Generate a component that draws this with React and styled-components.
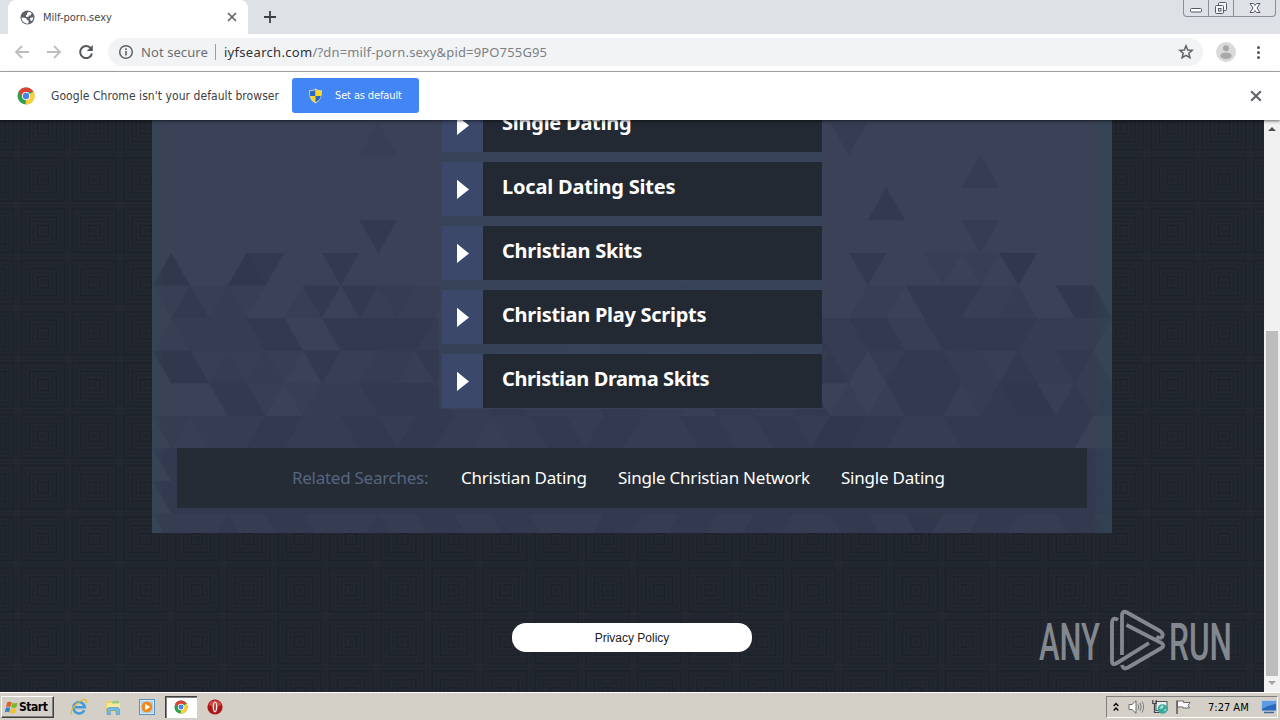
import React from 'react';
import styled, { createGlobalStyle } from 'styled-components';

const UI_FONT = '"DejaVu Sans Condensed", "DejaVu Sans", sans-serif';
const WEB_FONT = '"Noto Sans", "Open Sans", sans-serif';

const GlobalStyle = createGlobalStyle`
  * {
    box-sizing: border-box;
  }
  body {
    margin: 0;
    overflow: hidden;
    background: #1f242d;
  }
`;

const Screen = styled.div`
  display: flex;
  flex-direction: column;
  width: 1280px;
  height: 720px;
  font-family: ${WEB_FONT};
`;

const Text = styled.span`
  font-family: ${({ $font }) => $font || WEB_FONT};
  font-size: ${({ $size }) => $size}px;
  font-weight: ${({ $weight }) => $weight || 400};
  letter-spacing: ${({ $spacing }) => $spacing || 0}px;
  color: ${({ $color }) => $color};
  white-space: pre;
`;

/* browser frame */

const TabStrip = styled.div`
  display: flex;
  align-items: flex-start;
  height: 34px;
  padding-left: 8px;
  background: #dee1e6;
`;

const Tab = styled.div`
  display: flex;
  align-items: center;
  width: 240px;
  height: 34px;
  padding: 0 11px 0 12px;
  border-radius: 8px 8px 0 0;
  background: #fff;
`;

const TabTitle = styled(Text)`
  flex: 1;
  padding-left: 8px;
`;

const NewTab = styled.div`
  display: flex;
  width: 12px;
  margin: 11px auto 0 16px;
`;

const WindowButtons = styled.div`
  display: flex;
  width: 93px;
  height: 17px;
  margin-right: 4px;
  border: 1px solid #8b8f97;
  border-top: 0;
  border-radius: 0 0 4px 4px;
`;

const WindowButton = styled.div`
  display: flex;
  justify-content: center;
  width: ${({ $width }) => $width}px;
  border-right: ${({ $last }) => ($last ? '0' : '1px solid #8b8f97')};
`;

const Toolbar = styled.div`
  display: flex;
  align-items: center;
  height: 38px;
  padding: 0 12px 2px 14px;
  border-bottom: 1px solid #b0b2b5;
  background: #fff;
`;

const NavIcons = styled.div`
  display: flex;
  gap: 16px;
  width: 94px;
`;

const AddressBar = styled.div`
  display: flex;
  align-items: center;
  width: 1095px;
  height: 28px;
  padding: 0 9px 0 10px;
  border-radius: 14px;
  background: #f1f3f4;
`;

const SecurityLabel = styled(Text)`
  padding-left: 7px;
`;

const Divider = styled.span`
  width: 1px;
  height: 16px;
  margin: 0 8px 0 7px;
  background: #9a9da1;
`;

const Url = styled.div`
  flex: 1;
  display: flex;
`;

const ToolbarEnd = styled.div`
  display: flex;
  align-items: center;
  gap: 14px;
  padding-left: 13px;
`;

const InfoBar = styled.div`
  position: relative;
  z-index: 1;
  display: flex;
  align-items: center;
  height: 48px;
  padding: 0 18px 0 17px;
  background: #fff;
  box-shadow: 0 1px 3px rgba(0, 0, 0, 0.6);
`;

const InfoMessage = styled(Text)`
  width: 241px;
  padding-left: 16px;
`;

const DefaultButton = styled.div`
  display: flex;
  align-items: center;
  gap: 12px;
  width: 127px;
  height: 35px;
  margin: 0 auto 1px 16px;
  padding-left: 16px;
  border-radius: 3px;
  background: #4285f4;
`;

/* page */

const PageRow = styled.div`
  display: flex;
  height: 572px;
`;

const Viewport = styled.div`
  position: relative;
  display: flex;
  flex-direction: column;
  align-items: center;
  width: 1264px;
  overflow: hidden;
  background: #1f242d;
`;

const Backdrop = styled.svg`
  position: absolute;
  inset: 0;
`;

const Panel = styled.div`
  position: relative;
  display: flex;
  flex-direction: column;
  align-items: center;
  width: 960px;
  height: 413px;
  overflow: hidden;
  background: #3a4155;
`;

const LinkList = styled.div`
  position: relative;
  display: flex;
  flex-direction: column;
  gap: 10px;
  margin-top: -22px;
`;

const LinkRow = styled.div`
  display: flex;
  width: 380px;
  height: 54px;
  background: #232932;
`;

const Arrow = styled.div`
  display: flex;
  align-items: center;
  width: 41px;
  padding-left: 15px;
  background: #3b4869;
`;

const LinkLabel = styled(Text)`
  padding-left: 19px;
  line-height: 49px;
`;

const Related = styled.div`
  position: relative;
  display: flex;
  align-items: center;
  width: 910px;
  height: 60px;
  margin-top: 40px;
  padding: 0 0 2px 115px;
  background: #252c35;
`;

const RelatedItem = styled(Text)`
  width: ${({ $width }) => $width}px;
`;

const Privacy = styled.div`
  position: relative;
  width: 240px;
  height: 29px;
  margin-top: 90px;
  border-radius: 14px;
  background: #fff;
  line-height: 27px;
  text-align: center;
`;

const Watermark = styled.svg`
  position: absolute;
  right: 26px;
  bottom: 20px;
`;

const Scrollbar = styled.div`
  display: flex;
  flex-direction: column;
  align-items: center;
  justify-content: space-between;
  width: 16px;
  padding: 5px 0 5px;
  background: #f1f1f1;
`;

const Thumb = styled.div`
  width: 12px;
  height: 345px;
  margin: auto 0 3px;
  background: #bcbcbc;
`;

/* taskbar */

const Taskbar = styled.div`
  display: flex;
  align-items: center;
  height: 28px;
  padding: 1px 2px 0 1px;
  border-top: 1px solid #fff;
  background: #d4d0c8;
`;

const StartButton = styled.div`
  display: flex;
  align-items: center;
  width: 53px;
  height: 22px;
  padding-left: 2px;
  border: 1px solid;
  border-color: #fff #404040 #404040 #fff;
  box-shadow: inset -1px -1px 0 #808080;
`;

const QuickLaunch = styled.div`
  display: flex;
  align-items: center;
  padding-left: 8px;
`;

const TaskButton = styled.div`
  display: flex;
  align-items: center;
  justify-content: center;
  width: ${({ $active }) => ($active ? 32 : 34)}px;
  height: 22px;
  margin: 0 ${({ $active }) => ($active ? 1 : 0)}px;
  background: ${({ $active }) => ($active ? '#fff' : 'transparent')};
  box-shadow: ${({ $active }) =>
    $active ? 'inset 1px 1px 0 #404040, inset 2px 2px 0 #808080, inset -1px -1px 0 #fff' : 'none'};
`;

const Tray = styled.div`
  display: flex;
  align-items: center;
  width: 172px;
  height: 22px;
  margin-left: auto;
  padding-left: 5px;
  border: 1px solid;
  border-color: #808080 #fff #fff #808080;
`;

const TrayIcons = styled.div`
  display: flex;
  align-items: center;
  gap: 7px;
`;

const Clock = styled(Text)`
  flex: 1;
  padding-left: 16px;
`;

/*
 * Triangle mosaic of the panel. A row holds one character for each half
 * triangle step: a digit is how dark the cell is, a dot leaves it out.
 * "up" tells whether even or odd cells point upwards.
 */
const STEP = 18.82;
const ROW_HEIGHT = 32.6;
const MOSAIC = [
  { up: 1, cells: '...........1........................2' },
  { up: 1, cells: '...........................................2' },
  { up: 0, cells: '......................................3' },
  { up: 0, cells: '...........3...............................2' },
  { up: 0, cells: '4...43...3...........................3...1.1.4' },
  { up: 1, cells: '13121..13.31211..........11221.......11.333112..44' },
  { up: 0, cells: '1222233..33333223121221223322333333223311333332222' },
  { up: 1, cells: '4412121.31122132322112213322321332232.233322132232' },
  { up: 0, cells: '...331.1222333322332222332221332223.1.13331234413233' },
  { up: 1, cells: '2122233222332332212233233222332233244332223333333' },
  { up: 1, cells: '333333333333333333333333333333333333333333333333333' },
  { up: 1, cells: '333333333333333333333333333333333333333333333333333' },
  { up: 1, cells: '222322332223223322332223322332233222332242233222332' },
];

const shade = (code) => `rgba(38, 43, 66, ${Number(code) * 0.115})`;

const Mosaic = () => (
  <Backdrop width="960" height="413">
    <defs>
      <linearGradient id="edge" x1="0" y1="0" x2="1" y2="0">
        <stop offset="0" stopColor="#2d4a55" stopOpacity="0.45" />
        <stop offset="0.008" stopColor="#2d4a55" stopOpacity="0.3" />
        <stop offset="0.012" stopColor="#2d4a55" stopOpacity="0" />
        <stop offset="0.978" stopColor="#2d4a55" stopOpacity="0" />
        <stop offset="0.986" stopColor="#2d4a55" stopOpacity="0.25" />
        <stop offset="1" stopColor="#2d4a55" stopOpacity="0.45" />
      </linearGradient>
    </defs>
    <rect width="960" height="413" fill="#3b4156" />
    {MOSAIC.map(({ up, cells }, row) =>
      cells.split('').map((code, k) => {
        if (code === '.') return null;
        const x = 0.5 + k * STEP;
        const top = row * ROW_HEIGHT + 2.5;
        const bottom = top + ROW_HEIGHT;
        const points =
          k % 2 === up
            ? `${x},${bottom} ${x + STEP},${top} ${x + 2 * STEP},${bottom}`
            : `${x},${top} ${x + 2 * STEP},${top} ${x + STEP},${bottom}`;
        return <polygon key={`${row}-${k}`} points={points} fill={shade(code)} />;
      })
    )}
    <rect width="960" height="413" fill="url(#edge)" />
    <rect x="287" width="383" height="289" fill="#38455a" opacity="0.65" />
  </Backdrop>
);

const Weave = () => (
  <Backdrop width="1264" height="572">
    <defs>
      <pattern id="weave" x="17.3" y="-17.5" width="51.35" height="51.35" patternUnits="userSpaceOnUse">
        <g fill="none" stroke="#2a2f37" strokeWidth="1">
          {[3.5, 7.5, 11.5, 15.5, 19.5].map((r) => (
            <rect key={r} x={25.7 - r} y={25.7 - r} width={r * 2} height={r * 2} />
          ))}
          <path d="M0 1.5H51.4M0 49.5H51.4M1.5 0V51.4M49.5 0V51.4" />
        </g>
        <g fill="none" stroke="#191e26" strokeWidth="1">
          {[5.5, 13.5, 21.5].map((r) => (
            <rect key={r} x={25.7 - r} y={25.7 - r} width={r * 2} height={r * 2} />
          ))}
        </g>
      </pattern>
    </defs>
    <rect width="1264" height="572" fill="url(#weave)" opacity="0.5" />
  </Backdrop>
);

/* icons */

const Cross = ({ size = 10, color = '#5f6368' }) => (
  <svg width={size} height={size} viewBox="0 0 10 10">
    <path d="M1 1L9 9M9 1L1 9" stroke={color} strokeWidth="1.7" />
  </svg>
);

const Globe = () => (
  <svg width="15" height="15" viewBox="0 0 15 15">
    <circle cx="7.5" cy="7.5" r="7" fill="#5f6368" />
    <path
      d="M1.6 7.4L5.5 8Q7 8.500 6.800 10L8.500 10.400V13.400C4.500 13.800 1.600 11 1.600 7.400zM7 3.500L8.500 1.800Q10.500 2 11.700 3.300L10.500 5.500H8.500V7L6 6.800V5.300L7 5zM10 8L13.300 7.200Q13.300 9.500 12 11L10.500 10.500z"
      fill="#fff"
    />
  </svg>
);

const ArrowIcon = ({ forward }) => (
  <svg width="16" height="16" viewBox="0 0 16 16">
    <path
      d="M15 8H2M8 2L2 8L8 14"
      fill="none"
      stroke="#bbbdbf"
      strokeWidth="1.8"
      transform={forward ? 'matrix(-1 0 0 1 16 0)' : undefined}
    />
  </svg>
);

const Reload = () => (
  <svg width="16" height="16" viewBox="0 0 16 16">
    <path d="M13.2 4.8A6 6 0 1 0 14 9.5" fill="none" stroke="#54585d" strokeWidth="2" />
    <path d="M14.8 1V7H8.8z" fill="#54585d" />
  </svg>
);

const InfoIcon = () => (
  <svg width="16" height="16" viewBox="0 0 16 16">
    <circle cx="8" cy="8" r="6.3" fill="none" stroke="#5f6368" strokeWidth="1.5" />
    <path d="M8 7V11.6M8 4.300V6" stroke="#5f6368" strokeWidth="1.600" />
  </svg>
);

const Star = () => (
  <svg width="16" height="16" viewBox="0 0 16 16">
    <path
      d="M8 1.8L9.7 6 14.200 6.300 10.800 9.200 11.900 13.700 8 11.300 4.100 13.700 5.200 9.200 1.800 6.300 6.300 6z"
      fill="none"
      stroke="#5f6368"
      strokeWidth="1.5"
    />
  </svg>
);

const Avatar = () => (
  <svg width="20" height="20" viewBox="0 0 20 20">
    <circle cx="10" cy="10" r="10" fill="#dadada" />
    <circle cx="10" cy="6.2" r="3" fill="#a8a8a8" />
    <ellipse cx="10" cy="13.8" rx="5.7" ry="3.2" fill="#a8a8a8" />
  </svg>
);

const Dots = () => (
  <svg width="16" height="16" viewBox="0 0 16 16">
    <circle cx="8.5" cy="3.500" r="1.500" fill="#54585d" />
    <circle cx="8.5" cy="8.500" r="1.500" fill="#54585d" />
    <circle cx="8.5" cy="13.500" r="1.500" fill="#54585d" />
  </svg>
);

const Chrome = ({ size }) => (
  <svg width={size} height={size} viewBox="0 0 18 18">
    <circle cx="9" cy="9" r="8.5" fill="#2fa04e" />
    <path d="M9 9L16.4 4.8A8.5 8.5 0 0 1 8.6 17.5z" fill="#fbce3a" />
    <path d="M1.6 4.800L5.500 11 9 5H16.500A8.500 8.500 0 0 0 1.600 4.800z" fill="#dd4335" />
    <circle cx="9" cy="9" r="4.1" fill="#fff" />
    <circle cx="9" cy="9" r="3.2" fill="#4684e8" />
  </svg>
);

const Shield = () => (
  <svg width="15" height="16" viewBox="0 0 15 16">
    <path d="M7.5.5C9.500 2 12 2.300 14 2.300C14 8.500 13 12.500 7.500 15.500C2 12.500 1 8.500 1 2.300C3 2.300 5.500 2 7.500.5z" fill="#d9d4b4" />
    <path d="M7.5 1.800V8H2.200C2 6.500 2 5 2 3.200C4 3.200 6 2.800 7.500 1.800z" fill="#2b66c5" />
    <path d="M7.5 1.800V8H12.800C13 6.500 13 5 13 3.200C11 3.200 9 2.800 7.500 1.800z" fill="#fbd526" />
    <path d="M2.2 8H7.500V14.300C4.500 12.600 2.800 11 2.200 8z" fill="#fbd526" />
    <path d="M12.8 8H7.500V14.300C10.500 12.600 12.200 11 12.800 8z" fill="#2b66c5" />
  </svg>
);

const WindowsFlag = () => (
  <svg width="15" height="15" viewBox="0 0 16 16">
    <path d="M3.5 2.500C5 1.500 6.500 1.500 8 2.500L6.800 7.500C5.300 6.600 3.700 6.600 2.200 7.500z" fill="#e4572a" />
    <path d="M8.8 2.800C10.500 3.800 12.500 3.800 14.500 2.800L13.200 7.800C11.500 8.800 9.300 8.700 7.600 7.800z" fill="#79b82a" />
    <path d="M2 8.300C3.500 7.400 5 7.400 6.600 8.300L5.400 13.300C3.900 12.400 2.200 12.400.8 13.300z" fill="#2f80cf" />
    <path d="M7.4 8.700C9 9.600 11 9.600 13 8.600L11.700 13.500C9.900 14.500 7.900 14.500 6.200 13.600z" fill="#f8bf28" />
  </svg>
);

const InternetExplorer = () => (
  <svg width="18" height="18" viewBox="0 0 18 18">
    <path d="M14.3 12.200A5.700 5.700 0 1 1 14.800 9.200H5" fill="none" stroke="#3d9bdd" strokeWidth="2.600" />
    <path d="M2 16.5C-.5 14 4 6.500 10.500 3C14.500.8 17.500 1 16.200 5" fill="none" stroke="#e9b92f" strokeWidth="1.300" />
  </svg>
);

const Folder = () => (
  <svg width="18" height="18" viewBox="0 0 18 18">
    <path d="M2 3h5l1 1.500h7V14H2z" fill="#eccf69" />
    <path d="M3 5h13v8H3z" fill="#f7e8a0" />
    <path d="M8 3.500l7-1v3H8z" fill="#9acb77" />
    <path d="M3 16.500V11.500Q3 9.500 5 9.500H13.500Q15.500 9.500 15.500 11.500V16.500H12.200V12.500H6.300V16.500z" fill="#74b8df" stroke="#4b96c5" strokeWidth=".6" />
  </svg>
);

const MediaPlayer = () => (
  <svg width="16" height="16" viewBox="0 0 16 16">
    <rect x=".5" y=".5" width="15" height="15" fill="#d8e9f6" stroke="#5792c4" />
    <rect x="2" y="2" width="12" height="12" fill="#b2d1ea" />
    <circle cx="8" cy="8" r="5.4" fill="#f08a1d" />
    <path d="M6.2 4.800L11.200 8 6.200 11.200z" fill="#fff" />
  </svg>
);

const Opera = () => (
  <svg width="16" height="16" viewBox="0 0 16 16">
    <circle cx="8" cy="8" r="7.6" fill="#ab1618" />
    <path d="M1.5 6A7 7 0 0 1 14.500 6Q8 9 1.500 6z" fill="#d34743" />
    <ellipse cx="8" cy="8" rx="2.4" ry="5.4" fill="#f6e9e7" />
    <ellipse cx="8" cy="8" rx=".9" ry="4.2" fill="#b02a28" />
  </svg>
);

const Chevrons = () => (
  <svg width="9" height="12" viewBox="0 0 9 12">
    <path d="M1.7 5L4 2.500 6.300 5M1.700 9.500L4 7 6.300 9.500" fill="none" stroke="#000" strokeWidth="1.300" />
  </svg>
);

const Speaker = () => (
  <svg width="17" height="16" viewBox="0 0 17 16">
    <path d="M1 5.500H4L8 1.800V14.200L4 10.500H1z" fill="#fff" stroke="#6b6b6b" />
    <path d="M10 5.500Q11.500 8 10 10.500M12 4Q14.300 8 12 12M14 2.500Q17.300 8 14 13.500" fill="none" stroke="#7d7d7d" />
  </svg>
);

const Network = () => (
  <svg width="16" height="16" viewBox="0 0 16 16">
    <rect x="4" y="2.5" width="11" height="9" fill="#e9f0ee" stroke="#4b5558" />
    <path d="M.8 1V4.500H4.200V1M2.500 4.500V13.500H8" fill="none" stroke="#444" strokeWidth="1.200" />
    <circle cx="10.5" cy="10" r="4.8" fill="#37a898" />
    <path d="M7 9.500L10 6 12 7.500 9.500 10zM10.500 12.500L13.500 9.500 14.500 11z" fill="#a3e2d5" />
  </svg>
);

const Flag = () => (
  <svg width="17" height="16" viewBox="0 0 17 16">
    <path d="M2.5 2H8.500V3.500H15L13 6.500 14.500 9H8V8H2.500z" fill="#fff" stroke="#686868" />
    <path d="M2 1.500V15" stroke="#5a5a5a" strokeWidth="1.500" />
  </svg>
);

const Desktop = () => (
  <svg width="16" height="14" viewBox="0 0 16 14">
    <rect x=".5" y=".5" width="15" height="10.5" fill="#2a67be" stroke="#bccbde" />
    <path d="M1 1H15V4Q7 5 1 9z" fill="#5d9ce3" />
    <path d="M3 12.500H13" stroke="#416a9e" strokeWidth="1.500" />
  </svg>
);

const AnyRun = () => (
  <Watermark width="200" height="64" viewBox="0 0 200 64">
    <g fill="#83878e" fontFamily="Roboto, sans-serif" fontWeight="500" fontSize="52">
      <text x="1" y="51.5" textLength="61" lengthAdjust="spacingAndGlyphs">ANY</text>
      <text x="131" y="51.5" textLength="63" lengthAdjust="spacingAndGlyphs">RUN</text>
    </g>
    <g fill="none" stroke="#83878e" strokeWidth="3.8" strokeLinejoin="round">
      <path d="M80 12Q74 8 74 16V53Q74 58 79 55L111 35" />
      <path d="M84 47V8Q84 2 89 4.500L122 23Q126 26 124 29Q122 31 118.500 28.500" />
      <path d="M88.5 17L123.500 35Q127 37.500 123.500 40L90 59.500Q85 62 84 57" />
    </g>
  </Watermark>
);

const LINKS = [
  { label: 'Single Dating', spacing: -0.25 },
  { label: 'Local Dating Sites', spacing: -0.2 },
  { label: 'Christian Skits', spacing: -0.25 },
  { label: 'Christian Play Scripts', spacing: -0.27 },
  { label: 'Christian Drama Skits', spacing: -0.4 },
];

const RELATED = [
  { label: 'Christian Dating', width: 157 },
  { label: 'Single Christian Network', width: 223 },
  { label: 'Single Dating', width: 110 },
];

const App = () => (
  <Screen>
    <GlobalStyle />
    <TabStrip>
      <Tab>
        <Globe />
        <TabTitle $font={UI_FONT} $size={11} $color="#44474b">Milf-porn.sexy</TabTitle>
        <Cross />
      </Tab>
      <NewTab>
        <svg width="12" height="12" viewBox="0 0 12 12">
          <path d="M6 0V12M0 6H12" stroke="#3c4043" strokeWidth="1.8" />
        </svg>
      </NewTab>
      <WindowButtons>
        <WindowButton $width={25}>
          <svg width="12" height="16" viewBox="0 0 12 16">
            <rect x=".5" y="8.5" width="11" height="3.5" rx="1" fill="#fff" stroke="#555a66" />
          </svg>
        </WindowButton>
        <WindowButton $width={25}>
          <svg width="14" height="16" viewBox="0 0 14 16">
            <g fill="#f4f5f7" stroke="#555a66">
              <rect x="4.5" y="2.5" width="8" height="8" rx="1" />
              <rect x="1.5" y="5.5" width="8" height="8" rx="1" />
              <rect x="4.5" y="8.5" width="2.5" height="2.5" />
            </g>
          </svg>
        </WindowButton>
        <WindowButton $width={41} $last>
          <svg width="12" height="16" viewBox="0 0 12 16">
            <path d="M1 3.500H4.500L6 5.500 7.500 3.500H11L8 8 11 12.500H7.500L6 10.500 4.500 12.500H1L4 8z" fill="#fff" stroke="#555a66" />
          </svg>
        </WindowButton>
      </WindowButtons>
    </TabStrip>
    <Toolbar>
      <NavIcons>
        <ArrowIcon />
        <ArrowIcon forward />
        <Reload />
      </NavIcons>
      <AddressBar>
        <InfoIcon />
        <SecurityLabel $size={13} $spacing={0.08} $color="#6a6e73">Not secure</SecurityLabel>
        <Divider />
        <Url>
          <Text $size={13} $spacing={0.32} $color="#303236">iyfsearch.com</Text>
          <Text $size={13} $spacing={0.16} $color="#7d8185">/?dn=milf-porn.sexy&amp;pid=9PO755G95</Text>
        </Url>
        <Star />
      </AddressBar>
      <ToolbarEnd>
        <Avatar />
        <Dots />
      </ToolbarEnd>
    </Toolbar>
    <InfoBar>
      <Chrome size={18} />
      <InfoMessage $font={UI_FONT} $size={12} $spacing={0.06} $color="#3c4043">Google Chrome isn't your default browser</InfoMessage>
      <DefaultButton>
        <Shield />
        <Text $font={UI_FONT} $size={11} $spacing={-0.13} $color="#fff">Set as default</Text>
      </DefaultButton>
      <Cross size={12} />
    </InfoBar>
    <PageRow>
      <Viewport>
        <Weave />
        <Panel>
          <Mosaic />
          <LinkList>
            {LINKS.map(({ label, spacing }) => (
              <LinkRow key={label}>
                <Arrow>
                  <svg width="12" height="20" viewBox="0 0 12 20">
                    <path d="M0 .8L12 10.500 0 20z" fill="#fff" />
                  </svg>
                </Arrow>
                <LinkLabel $size={20} $weight={700} $color="#fff" $spacing={spacing}>{label}</LinkLabel>
              </LinkRow>
            ))}
          </LinkList>
          <Related>
            <RelatedItem $width={169} $size={17} $spacing={-0.27} $color="#566580">Related Searches:</RelatedItem>
            {RELATED.map(({ label, width }) => (
              <RelatedItem key={label} $width={width} $size={17} $spacing={-0.22} $color="#fff">{label}</RelatedItem>
            ))}
          </Related>
        </Panel>
        <Privacy>
          <Text $font='"Liberation Sans", sans-serif' $size={12} $color="#222">Privacy Policy</Text>
        </Privacy>
        <AnyRun />
      </Viewport>
      <Scrollbar>
        <svg width="8" height="8" viewBox="0 0 8 8">
          <path d="M0 6L4 2 8 6z" fill="#505050" />
        </svg>
        <Thumb />
        <svg width="8" height="8" viewBox="0 0 8 8">
          <path d="M0 2L4 6 8 2z" fill="#a3a3a3" />
        </svg>
      </Scrollbar>
    </PageRow>
    <Taskbar>
      <StartButton>
        <WindowsFlag />
        <Text $font={UI_FONT} $size={12} $weight={700} $spacing={-0.45} $color="#000">Start</Text>
      </StartButton>
      <QuickLaunch>
        <TaskButton><InternetExplorer /></TaskButton>
        <TaskButton><Folder /></TaskButton>
        <TaskButton><MediaPlayer /></TaskButton>
        <TaskButton $active><Chrome size={14} /></TaskButton>
        <TaskButton><Opera /></TaskButton>
      </QuickLaunch>
      <Tray>
        <TrayIcons>
          <Chevrons />
          <Speaker />
          <Network />
          <Flag />
        </TrayIcons>
        <Clock $font={UI_FONT} $size={11} $color="#000">7:27 AM</Clock>
        <Desktop />
      </Tray>
    </Taskbar>
  </Screen>
);

export default App;
